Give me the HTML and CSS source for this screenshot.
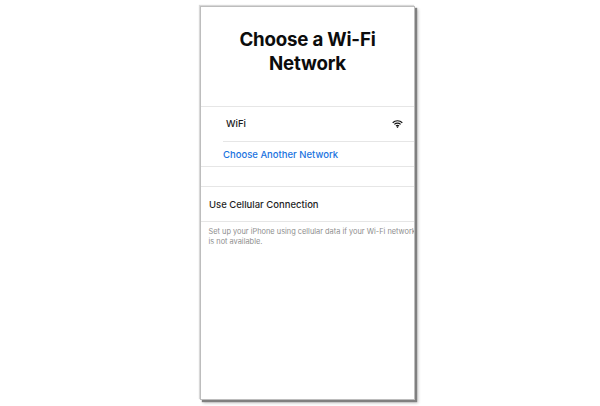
FILE: index.html
```html
<!DOCTYPE html>
<html lang="en">
<head>
<meta charset="utf-8">
<title>Choose a Wi-Fi Network</title>
<link rel="stylesheet" href="styles.css">
</head>
<body>
<main class="phone">
  <h1 class="title">Choose a Wi-Fi<br>Network</h1>
  <section class="group">
    <div class="row row-wifi">
      <span>WiFi</span>
      <svg class="wifi" viewBox="0 0 12 9" width="11" height="8" aria-hidden="true">
        <path d="M0.6 3.1A7.6 7.6 0 0 1 11.4 3.1" />
        <path d="M2.5 5A4.9 4.9 0 0 1 9.5 5" />
        <path d="M4.3 6.8A2.4 2.4 0 0 1 7.7 6.8" />
        <circle cx="6" cy="8" r="0.9" />
      </svg>
    </div>
    <div class="row row-link">Choose Another Network</div>
  </section>
  <section class="group group-cell">
    <div class="row row-cell">Use Cellular Connection</div>
  </section>
  <p class="note">Set up your iPhone using cellular data if your Wi-Fi network<br>is not available.</p>
</main>
</body>
</html>
```

FILE: styles.css
```css
* { box-sizing: border-box; }
html, body { margin: 0; height: 100%; background: #fff; }
body {
  width: 600px;
  height: 406px;
  overflow: hidden;
  padding: 6px 0 0 200px;
  font-family: Inter, "Liberation Sans", sans-serif;
}
.phone {
  width: 215px;
  height: 394px;
  background: #fff;
  border: 1px solid #bdbdbd;
  box-shadow: 2px 2px 1px #808080, 3px 3px 3px #c0c0c0, -1px -1px 1px #d8d8d8;
  overflow: hidden;
}
.title {
  margin: 0;
  height: 99px;
  padding-top: 21px;
  font-size: 18.7px;
  line-height: 23.5px;
  font-weight: 700;
  text-align: center;
  color: #0c0c0c;
  letter-spacing: -0.2px;
}
.group {
  border-top: 1px solid #e6e6e6;
  border-bottom: 1px solid #e6e6e6;
}
.row {
  display: flex;
  align-items: center;
  font-size: 9.5px;
  font-weight: 500;
}
.row-wifi {
  height: 35px;
  margin-left: 22px;
  padding: 0 11px 1px 3px;
  justify-content: space-between;
  border-bottom: 1px solid #e6e6e6;
  color: #1a1a1a;
}
.row-link {
  height: 24px;
  margin-left: 22px;
  color: #1a73e0;
}
.group-cell { margin-top: 19px; }
.row-cell {
  height: 34px;
  padding-left: 8px;
  color: #1f1f1f;
}
.wifi { fill: #111; stroke: none; }
.wifi path { fill: none; stroke: #111; stroke-width: 1.3; }
.note {
  margin: 0;
  padding: 5px 0 0 7.5px;
  font-size: 7.4px;
  line-height: 10px;
  color: #8e8e8e;
  white-space: nowrap;
}
```
